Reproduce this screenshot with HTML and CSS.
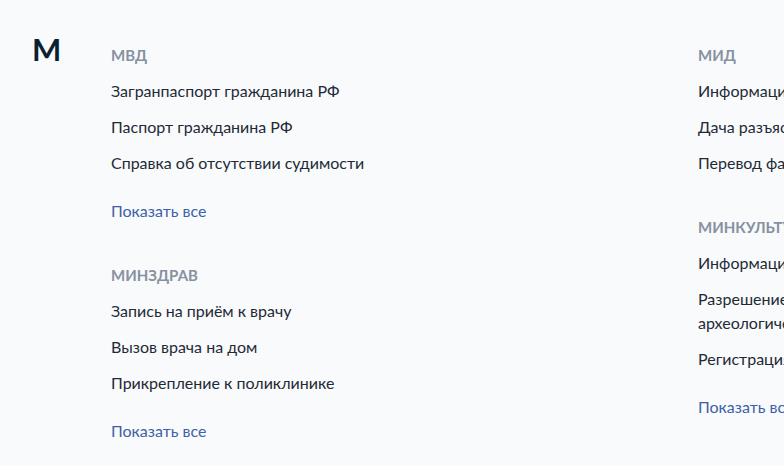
FILE: index.html
```
<!DOCTYPE html>
<html lang="ru">
<head>
    <meta charset="UTF-8">
    <meta name="viewport" content="width=device-width, initial-scale=1.0">
    <title>Ведомства</title>
    <link rel="stylesheet" href="styles.css">
</head>
<body>
    <div class="letter-block">
        <div class="letter">М</div>

        <div class="columns">
            <div class="column">
                <div class="agency">
                    <h3 class="agency-title">МВД</h3>
                    <ul class="services">
                        <li>Загранпаспорт гражданина РФ</li>
                        <li>Паспорт гражданина РФ</li>
                        <li>Справка об отсутствии судимости</li>
                    </ul>
                    <a class="show-all" href="#">Показать все</a>
                </div>

                <div class="agency">
                    <h3 class="agency-title">МИНЗДРАВ</h3>
                    <ul class="services">
                        <li>Запись на приём к врачу</li>
                        <li>Вызов врача на дом</li>
                        <li>Прикрепление к поликлинике</li>
                    </ul>
                    <a class="show-all" href="#">Показать все</a>
                </div>
            </div>

            <div class="column">
                <div class="agency">
                    <h3 class="agency-title">МИД</h3>
                    <ul class="services">
                        <li>Информация о визах</li>
                        <li>Дача разъяснений</li>
                        <li>Перевод фамилии</li>
                    </ul>
                </div>

                <div class="agency">
                    <h3 class="agency-title">МИНКУЛЬТУРЫ</h3>
                    <ul class="services">
                        <li>Информация о музеях</li>
                        <li>Разрешение на проведение археологических работ</li>
                        <li>Регистрация фильма</li>
                    </ul>
                    <a class="show-all" href="#">Показать все</a>
                </div>

                <div class="agency">
                    <h3 class="agency-title">МИНТРАНС</h3>
                </div>
            </div>
        </div>
    </div>
</body>
</html>
```

FILE: styles.css
```
:root {
    --text-color: #1f2a36;
    --muted-color: #8791a0;
    --link-color: #3e61a8;
}

body {
    font-family: Lato, 'Noto Sans', sans-serif;
    background: #f8fafc;
    color: var(--text-color);
    margin: 0;
    overflow: hidden;
}

/* блок буквы */
.letter-block {
    display: flex;
    padding: 31px 0 0 32px;
    width: 1400px;
}

.letter {
    width: 79px;
    flex-shrink: 0;
    font-size: 31px;
    font-weight: 700;
    line-height: 36px;
    color: #0b1f33;
}

.columns {
    display: grid;
    grid-template-columns: 587px 587px;
}

.column {
    padding-top: 12px;
}

/* ведомство */
.agency {
    margin-bottom: 40px;
}

.agency-title {
    margin: 0 0 12px;
    font-size: 15px;
    font-weight: 700;
    line-height: 24px;
    color: var(--muted-color);
    text-transform: uppercase;
}

.services {
    list-style: none;
    margin: 0;
    padding: 0;
    max-width: 300px;
}

.services li {
    font-size: 16px;
    line-height: 24px;
    margin-bottom: 12px;
}

.services li:last-child {
    margin-bottom: 0;
}

.show-all {
    display: block;
    margin-top: 24px;
    font-size: 16px;
    line-height: 24px;
    color: var(--link-color);
    text-decoration: none;
}
```
